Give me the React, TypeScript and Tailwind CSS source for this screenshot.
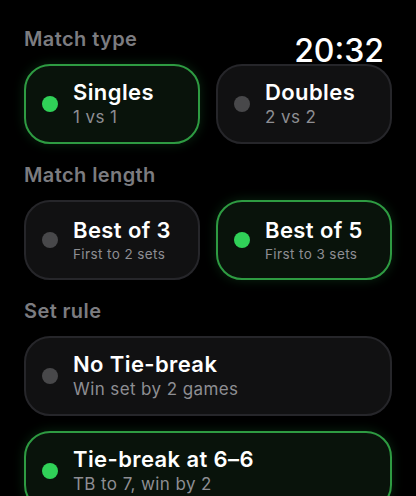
import React from "react";

type Option = {
  title: string;
  sub: string;
  on: boolean;
  small?: boolean;
};

const OptionCard = ({ title, sub, on, small }: Option) => (
  <div
    className={
      on
        ? "h-20 rounded-[26px] border-2 border-[#2e9b42] bg-[#09130b] shadow-[0_0_12px_rgba(48,209,88,0.18)] flex items-center pl-4 pr-4 gap-[15px]"
        : "h-20 rounded-[26px] border-2 border-[#26262a] bg-[#111112] flex items-center pl-4 pr-4 gap-[15px]"
    }
  >
    <span className={on ? "w-4 h-4 rounded-full bg-[#30d158] shrink-0" : "w-4 h-4 rounded-full bg-[#48484a] shrink-0"} />
    <div className="flex flex-col min-w-0">
      <span className="text-[22px] leading-[27px] font-semibold text-white tracking-[0.4px] whitespace-nowrap">{title}</span>
      <span
        className={
          small
            ? "text-[13.5px] leading-[20px] text-[#8e8e93] tracking-[0.4px] whitespace-nowrap"
            : "text-[17px] leading-[23px] text-[#8e8e93] tracking-[0.4px] whitespace-nowrap"
        }
      >
        {sub}
      </span>
    </div>
  </div>
);

const Label = ({ children }: { children: React.ReactNode }) => (
  <div className="h-6 text-[20px] leading-6 font-semibold text-[#7c7c80] tracking-[0.4px] mb-[13px]">{children}</div>
);

export default function App() {
  return (
    <div
      className="relative w-[416px] h-[496px] overflow-hidden bg-black px-6 pt-[27px]"
      style={{ fontFamily: "Inter, 'Noto Sans', sans-serif" }}
    >
      {/* Clock */}
      <div className="absolute right-[32px] top-[33px] text-[32px] leading-[36px] font-medium text-white">20:32</div>

      <Label>Match type</Label>
      <div className="grid grid-cols-2 gap-4">
        <OptionCard title="Singles" sub="1 vs 1" on />
        <OptionCard title="Doubles" sub="2 vs 2" on={false} />
      </div>

      <div className="mt-[19px]">
        <Label>Match length</Label>
        <div className="grid grid-cols-2 gap-4">
          <OptionCard title="Best of 3" sub="First to 2 sets" on={false} small />
          <OptionCard title="Best of 5" sub="First to 3 sets" on small />
        </div>
      </div>

      <div className="mt-[19px]">
        <Label>Set rule</Label>
        <div className="flex flex-col gap-[15px]">
          <OptionCard title="No Tie-break" sub="Win set by 2 games" on={false} />
          <OptionCard title="Tie-break at 6–6" sub="TB to 7, win by 2" on />
        </div>
      </div>
    </div>
  );
}
